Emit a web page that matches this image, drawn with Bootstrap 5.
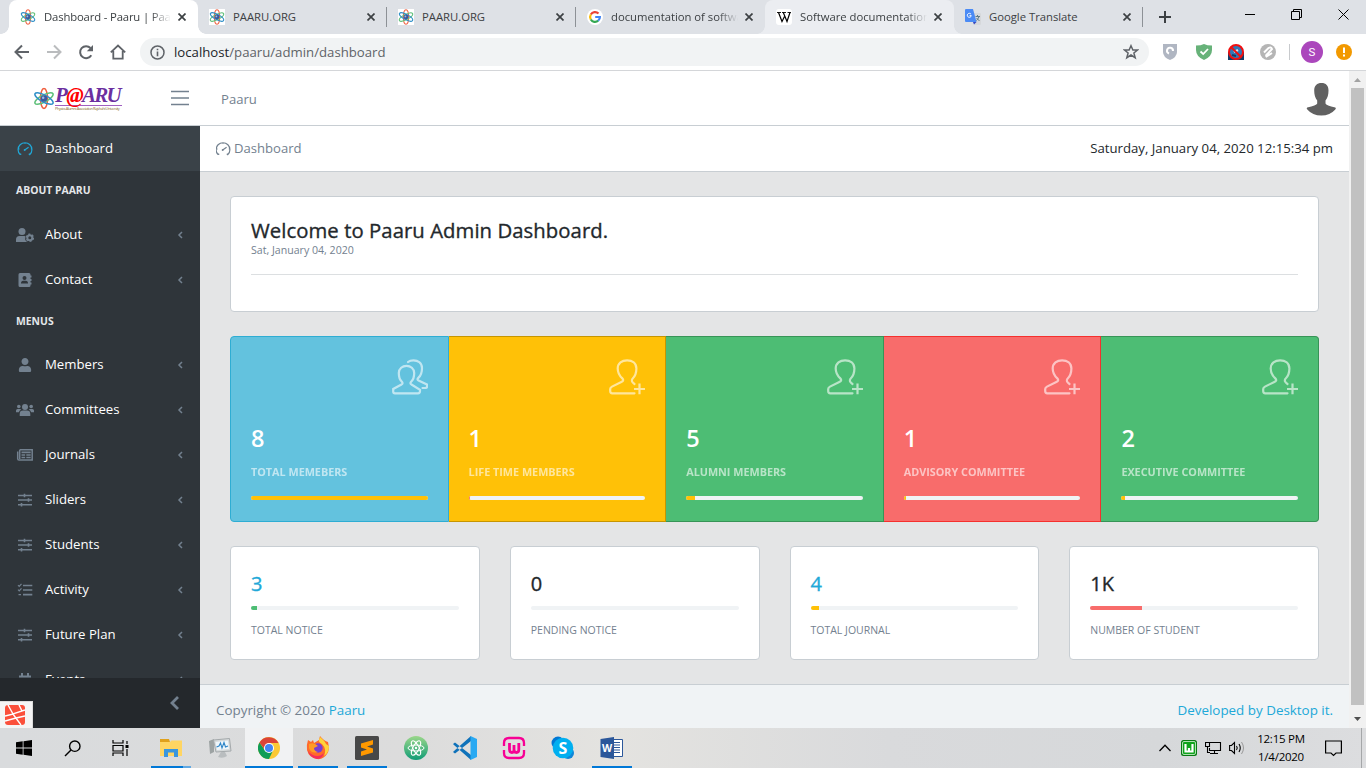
<!DOCTYPE html>
<html lang="en">
<head>
<meta charset="utf-8">
<meta name="viewport" content="width=device-width, initial-scale=1">
<title>Dashboard - Paaru | Paaru Admin</title>
<link href="https://cdn.jsdelivr.net/npm/bootstrap@5.3.0/dist/css/bootstrap.min.css" rel="stylesheet">
<style>
:root{--line:#c8ced3;--cyan:#20a8d8;--muted:#73818f}
html,body{height:768px;overflow:hidden}
body{font-family:"Open Sans","Noto Sans",sans-serif;font-size:13.1px;line-height:1.5;color:#23282c;background:#fff}
svg{display:block;flex:none}
.ln{fill:none}
.ln:not([stroke]){stroke:currentColor}
/* browser tabs */
.tabstrip{height:34px;background:#dee1e6;padding-left:9px;color:#3c4043}
.btab{width:189px;height:34px;padding:0 10px 0 11px;position:relative;font-size:11.3px;letter-spacing:-.02px}
.btab .ttl{width:127px;margin:0 7px 0 8px;overflow:hidden;white-space:nowrap}
.btab .fade-end{-webkit-mask-image:linear-gradient(90deg,#000 84%,transparent)}
.btab.on .ttl{letter-spacing:-.15px}
.btab.on,.btab.hov{border-radius:8px 8px 0 0}
.btab.on{background:#fff}.btab.hov{background:#ebedf1}
.btab.on::before,.btab.on::after,.btab.hov::before,.btab.hov::after{content:"";position:absolute;bottom:0;width:8px;height:8px}
.btab.on::before,.btab.hov::before{left:-8px;background:radial-gradient(circle at 0 0,transparent 7.5px,var(--t) 8px)}
.btab.on::after,.btab.hov::after{right:-8px;background:radial-gradient(circle at 100% 0,transparent 7.5px,var(--t) 8px)}
.btab.on{--t:#fff}.btab.hov{--t:#ebedf1}
.btab.sep::after{content:"";position:absolute;right:0;top:7px;width:1px;height:20px;background:#8d9196}
.winbtns{margin-left:auto;color:#000;padding-right:17px;padding-bottom:6px;gap:36px}
/* address row */
.toolrow{height:37px;border-bottom:1px solid #d4d6d9;padding:0 14px 0 14px;color:#5f6368}
.omni{height:28px;width:1009px;background:#f1f3f4;border-radius:14px;padding:0 10px;margin-left:14px;font-size:13.2px}
.omni .addr{margin-left:9px;padding-top:1px}
/* app */
.viewport{height:657px}
.topbar{height:55px;border-bottom:1px solid var(--line);color:var(--muted)}
.brandbox{width:170px;padding-left:33px}
.wordmark{width:67px}
.logo{font:italic bold 21px "Liberation Serif",serif;color:#6b2fa0;line-height:19px;letter-spacing:-1.7px;white-space:nowrap}
.logo b{color:#f00}
.logo-sub{font-size:4px;line-height:5px;border-top:1px solid #a060c0;color:#8a6d2f;white-space:nowrap;letter-spacing:-.48px}
.side{width:200px;background:#2f353a;color:#fff;height:602px}
.side .menu{height:552px;overflow:hidden}
.side .nav-link{height:45px;padding:1px 17px 0 16px;color:#fff;font-size:13.2px}
.side .nav-link svg:first-child{width:18px;height:16px;color:var(--muted);margin-right:11px}
.side .nav-link.active{background:#3a4248}
.side .nav-link.active svg:first-child{color:var(--cyan)}
.side .chev{margin-left:auto;color:var(--muted)}
.side .grp{height:40.500px;padding:0 16px;line-height:39px;font-size:10.4px;font-weight:700;color:#e4e7ea}
.mini{height:50px;background:#24282c;color:var(--muted);padding-right:20px}
.work{background:#e4e5e6;height:602px;overflow:hidden}
.crumbs{height:46px;border-bottom:1px solid var(--line);background:#fff;padding:1px 16px 0;color:var(--muted)}
.crumbs .now{color:#23282c;font-size:13.2px}
.panels{padding:24px 30px;gap:24px}
.card{border-color:var(--line);border-radius:4px}
.welcome{height:116px;padding:20px}
.welcome h1{font-size:20.3px;font-weight:400;-webkit-text-stroke:.35px currentColor;line-height:26px;margin:0 0 1px;letter-spacing:.07px}
.welcome small{font-size:10.600px;line-height:13px;color:var(--muted)}
.welcome hr{margin:17px 0 0;border-color:#dcdfe1;opacity:1}
.stats{height:186px}
.stats .card{padding:20px;color:#fff}
.stats .num{font-size:23.5px;font-weight:600;line-height:34px;margin-top:26px}
.stats .lbl{font-size:10.8px;font-weight:700;opacity:.6;line-height:17px;margin:8px 0 16px;white-space:nowrap}
.stats .ico{opacity:.6;margin:2px 0 0 auto}
.progress{height:4px;flex:none;border-radius:4px;background:#f0f3f5}
.c-info{background:#63c2de;border-color:#2eadd3}
.c-warn{background:#ffc107;border-color:#c69500}
.c-ok{background:#4dbd74;border-color:#379457}
.c-bad{background:#f86c6b;border-color:#f5302e}
.b-warn{background:#ffc107}.b-ok{background:#4dbd74}.b-bad{background:#f86c6b}
.minis{gap:30px}
.minis .card{height:114px;padding:20px;flex:1 1 0}
.minis .num{font-size:20px;-webkit-text-stroke:.35px currentColor;line-height:34px}
.minis .progress{margin:5px 0 11px}
.minis .lbl{font-size:10.500px;line-height:18px;color:var(--muted);white-space:nowrap}
.cy{color:var(--cyan)}
.foot{height:50px;border-top:1px solid var(--line);background:#f0f3f5;padding:1px 16px 0;color:var(--muted);font-size:13.400px}
.sbar{width:17px;background:#f1f1f1;height:657px}
.sbar .thumb{width:13px;height:617px;background:#c1c1c1}
.debugbar{position:absolute;left:0;top:701px;width:33px;height:27px;background:#f5f5f5;border:1px solid #ddd;border-left:0;border-bottom:0;padding:3px 5px}
/* taskbar */
.tasks{height:40px;background:linear-gradient(90deg,#d9dbdd 0,#dcdcdc 30%,#e4e3e0 45%,#d9dadc 65%,#d6d8da 85%,#dcdddf);color:#000}
.tk{width:48px;height:40px;display:flex;align-items:center;justify-content:center}
.apps{margin-left:3px;gap:1px}
.run{background:linear-gradient(#0078d7,#0078d7) 50% 100%/40px 2px no-repeat}
.run-multi{background:linear-gradient(90deg,#0078d7 80%,#62a9e3 80%) 50% 100%/40px 2px no-repeat}
.cur{background:linear-gradient(#0078d7,#0078d7) 0 100%/48px 2px no-repeat #f1f2f3}
.clock{font-size:11.500px;line-height:18px;width:62px;letter-spacing:-.25px;text-align:center;padding-bottom:1px}
</style>
</head>
<body>
<svg width="0" height="0" class="position-absolute">
<defs>
<symbol id="atom" viewBox="0 0 16 16"><g fill="none" stroke-width="1.1"><ellipse cx="8" cy="8" rx="2.6" ry="7.3" stroke="#f06040"/><ellipse cx="8" cy="8" rx="2.6" ry="7.4" transform="rotate(62 8 8)" stroke="#5fc07a"/><ellipse cx="8" cy="8" rx="2.6" ry="7.4" transform="rotate(-62 8 8)" stroke="#2f8fc8"/></g><circle cx="8" cy="8" r="2.4" fill="#3c5a9c"/><circle cx="7.4" cy="7.4" r=".9" fill="#9db8e8"/></symbol>
<symbol id="x" viewBox="0 0 8 8"><path class="ln" stroke-width="1.7" d="M.5.5l7 7M7.5.5l-7 7"/></symbol>
<symbol id="speed" viewBox="0 0 18 16"><path class="ln" stroke-width="1.2" d="M4.2 13.6A6.9 6.9 0 1 1 13.8 13.6L12.8 12.7M4.2 13.6L5.2 12.7M9 8.8L12.6 6.3M2.2 8h1.4M9 1.7v1M14.8 8h1"/><circle cx="8.7" cy="9" r="1" fill="currentColor"/></symbol>
<symbol id="user" viewBox="-56 0 560 512"><path fill="currentColor" d="M224 256c70.7 0 128-57.3 128-128S294.700 0 224 0 96 57.300 96 128s57.300 128 128 128zm89.600 32h-16.700c-22.200 10.200-46.900 16-72.900 16s-50.600-5.800-72.900-16h-16.700C60.200 288 0 348.200 0 422.400V464c0 26.500 21.500 48 48 48h352c26.500 0 48-21.500 48-48v-41.600c0-74.200-60.200-134.400-134.400-134.400z"/></symbol>
<symbol id="usercog" viewBox="0 0 18 16"><circle cx="6" cy="4.500" r="3.500" fill="currentColor"/><path fill="currentColor" d="M0 15V12.500Q0 9 3.500 9H8.500Q9.500 9 9.200 10L9.300 13L11 15Z"/><circle cx="13.800" cy="10.800" r="2.500" class="ln" stroke-width="2"/><circle cx="13.800" cy="10.800" r="3.700" class="ln" stroke-width="1.200" stroke-dasharray="2 1.870"/></symbol>
<symbol id="book" viewBox="0 0 18 16"><path fill="currentColor" fill-rule="evenodd" d="M4 1H13Q14.500 1 14.500 2.500V3.500H15.500V5.500H14.500V7H15.500V9H14.500V10.500H15.500V12.500H14.500V13.500Q14.500 15 13 15H4Q2.500 15 2.500 13.500V2.500Q2.500 1 4 1ZM8.500 4A2 2 0 1 0 8.500 8A2 2 0 1 0 8.500 4ZM5 11.500H12Q12 8.700 9.800 8.700H7.200Q5 8.700 5 11.500Z"/></symbol>
<symbol id="group" viewBox="0 0 18 16"><g fill="currentColor"><circle cx="9" cy="5" r="3"/><circle cx="2.800" cy="4.500" r="1.800"/><circle cx="15.200" cy="4.500" r="1.800"/><path d="M3.700 14V12Q3.700 8.600 7 8.600H11Q14.300 8.600 14.300 12V14ZM0 10.200V8.500Q0 7 1.600 7H4Q4.800 7 5.300 7.500Q3.200 8.500 2.900 10.200ZM18 10.200V8.500Q18 7 16.400 7H14Q13.200 7 12.700 7.500Q14.800 8.500 15.100 10.200Z"/></g></symbol>
<symbol id="news" viewBox="0 0 18 16"><path class="ln" stroke-width="1.500" d="M3.700 2.700H16.200V13H3Q1.700 13 1.700 11.700V4.500M3.700 2.700V12"/><path class="ln" stroke-width="1.700" d="M5.500 5.300H14.700M5.500 8H9.200M10.300 8H14.700M5.500 10.500H9.200M10.300 10.500H14.700"/></symbol>
<symbol id="sliders" viewBox="0 0 18 16"><path class="ln" stroke-width="1.600" d="M2 3.500H16M2 8H16M2 12.700H16M8.500 1.800V5.200M12.500 6.300V9.700M5.500 11V14.400"/></symbol>
<symbol id="tasks" viewBox="0 0 18 16"><path class="ln" stroke-width="1.700" d="M7 3.500H16.300M7 8H16.300M7 12.700H16.300"/><path class="ln" stroke-width="1.200" d="M2 3.200L3.200 4.400L5.500 1.800M2 7.700L3.200 8.900L5.500 6.300M2.500 12.700H5"/></symbol>
<symbol id="cal" viewBox="0 0 18 16"><path fill="currentColor" d="M3 3.500H5V1H7V3.500H11V1H13V3.500H15V5.500H3ZM3 6.500H15V15H3Z"/></symbol>
<symbol id="chev" viewBox="0 0 6 8"><path class="ln" stroke-width="1.500" d="M5 1L2 4L5 7"/></symbol>
<symbol id="follow" viewBox="0 0 36 36"><path class="ln" stroke-width="2.200" stroke-linecap="round" d="M25.500 34.300H3.300Q1.200 34.300 1.200 32V30Q1.200 28.600 3 27.600L12.300 23Q15.500 21.500 13.300 19.400C9.700 16 8.700 13 8.700 9.500C8.700 4 13 1.300 18.100 1.300S27.400 4 27.400 9.500C27.400 13 27 16.500 23.500 19.700Q21.500 22.500 25.500 25"/><path class="ln" stroke-width="2.200" d="M30.500 24.500V35.300M25 30H36"/></symbol>
<symbol id="people" viewBox="0 0 36 36"><path class="ln" stroke-width="2.200" stroke-linecap="round" d="M3 34.300H26Q28 34.300 28 32V30.800L19.500 25.500Q17.500 24.500 19.300 22.500C21.500 20.500 22.200 17 22.200 14C22.200 9.500 18.500 6.800 14.500 6.800S6.800 9.500 6.800 14C6.800 17 7.500 20.500 9.700 22.500Q11.500 24.500 9.500 25.500L1.200 30V32.500Q1.200 34.300 3 34.300ZM16 3Q18 1.300 21.500 1.300C26 1.300 30 4 30 9C30 13 29 16.500 26.500 18.700Q24.500 20.500 26.500 21.500L35 25.500V27.500Q35 29 33.500 29H30.500"/></symbol>
</defs>
</svg>

<header>
<div class="tabstrip d-flex align-items-center">
  <div class="btab on d-flex align-items-center"><svg width="16" height="16"><use href="#atom"/></svg><span class="ttl fade-end">Dashboard - Paaru | Paaru</span><svg width="8" height="8"><use href="#x"/></svg></div>
  <div class="btab sep d-flex align-items-center"><svg width="16" height="16" class="bg-white"><use href="#atom"/></svg><span class="ttl">PAARU.ORG</span><svg width="8" height="8"><use href="#x"/></svg></div>
  <div class="btab sep d-flex align-items-center"><svg width="16" height="16" class="bg-white"><use href="#atom"/></svg><span class="ttl">PAARU.ORG</span><svg width="8" height="8"><use href="#x"/></svg></div>
  <div class="btab d-flex align-items-center"><svg width="16" height="16" viewBox="0 0 16 16"><circle cx="8" cy="8" r="8" fill="#fff"/><g fill="none" stroke-width="2.200"><path stroke="#ea4335" d="M3.800 5.500A4.900 4.900 0 0 1 11.500 4.500"/><path stroke="#fbbc05" d="M3.800 10.500A4.900 4.900 0 0 1 3.800 5.500"/><path stroke="#34a853" d="M3.800 10.500A4.900 4.900 0 0 0 11.200 11.700"/><path stroke="#4285f4" d="M11.200 11.700Q12.900 10.200 12.900 8H8.200"/></g></svg><span class="ttl fade-end">documentation of software</span><svg width="8" height="8"><use href="#x"/></svg></div>
  <div class="btab hov d-flex align-items-center"><svg width="16" height="16" viewBox="0 0 16 16"><rect width="16" height="16" rx="3" fill="#fff"/><path d="M1 3.500H5M6 3.500H10M11.500 3.500H15" stroke="#000" stroke-width=".9"/><path class="ln" stroke="#000" stroke-width="1.200" d="M2.500 3.500L6 12.500L8.500 7.500M7.300 3.500L11 12.500L14 3.500"/></svg><span class="ttl fade-end">Software documentation</span><svg width="8" height="8"><use href="#x"/></svg></div>
  <div class="btab sep d-flex align-items-center"><svg width="16" height="16" viewBox="0 0 16 16"><path d="M7 4H15Q16 4 16 5V15Q16 16 15 16H9Z" fill="#d6d8db"/><path d="M1 0H8L11.500 13H1Q0 13 0 12V1Q0 0 1 0Z" fill="#4b8bf5"/><path d="M8 13H11.500L9 15.500Z" fill="#3547c0"/><path class="ln" stroke="#fff" stroke-width="1" d="M6 5.200A2 2 0 1 0 6.300 6.700H4.500"/><path class="ln" stroke="#607d8b" stroke-width="1" d="M10.500 7.500H15M12.500 6V7.500M14 7.500Q13.500 10 11.300 11.500M11.500 9L14.500 12"/></svg><span class="ttl">Google Translate</span><svg width="8" height="8"><use href="#x"/></svg></div>
  <svg class="ms-3" width="12" height="12" viewBox="0 0 12 12"><path stroke="#3c4043" stroke-width="2" d="M6 0V12M0 6H12"/></svg>
  <div class="winbtns d-flex align-items-center">
    <svg width="10" height="10"><path stroke="#000" d="M0 5.500H10"/></svg>
    <svg width="11" height="11"><path class="ln" d="M.5 2.500H8.500V10.500H.5ZM2.500 2.500V.5H10.500V8.500H8.500"/></svg>
    <svg width="11" height="11"><path class="ln" d="M.5.5L10.500 10.500M10.500.5L.5 10.500"/></svg>
  </div>
</div>
<div class="toolrow d-flex align-items-center">
  <svg width="16" height="16"><path class="ln" stroke-width="2" d="M15 8H2M8 1.500L1.500 8L8 14.500"/></svg>
  <svg class="ms-3" width="16" height="16"><path class="ln" stroke="#babcbe" stroke-width="2" d="M1 8H14M8 1.500L14.500 8L8 14.500"/></svg>
  <svg class="ms-3" width="16" height="16"><path class="ln" stroke-width="2" d="M13.300 11.200A6 6 0 1 1 12.500 4"/><path fill="currentColor" d="M15 1V7.200H8.800Z"/></svg>
  <svg class="ms-3" width="16" height="16"><path class="ln" stroke-width="1.800" d="M.8 8.300L8 1.500L15.200 8.300M3.300 7V14.700H12.700V7"/></svg>
  <div class="omni d-flex align-items-center"><svg width="15" height="15" viewBox="0 0 15 15"><circle class="ln" cx="7.500" cy="7.500" r="6.500" stroke-width="1.500"/><path class="ln" stroke-width="1.600" d="M7.500 6.500V11.200M7.500 3.800V5.300"/></svg>
    <span class="addr"><span class="text-dark">localhost</span>/paaru/admin/dashboard</span>
    <svg class="ms-auto" width="16" height="16"><path class="ln" stroke-width="1.500" d="M8 1.700L9.900 6H14.500L10.900 9L12.200 13.700L8 11L3.800 13.700L5.100 9L1.500 6H6.100Z"/></svg></div>
  <div class="d-flex align-items-center ms-auto">
    <svg width="14" height="16"><path fill="#b0b6c2" d="M0 0H14V8Q14 13 7 16Q0 13 0 8Z"/><path class="ln" stroke="#fff" stroke-width="2" d="M6 9.500A3 3 0 1 1 10 7"/></svg>
    <svg width="16" height="16" style="margin-left:19px"><path fill="#67b279" d="M0 1.500Q5 1.500 8 0Q11 1.500 16 1.500V6Q16 12.500 8 16Q0 12.500 0 6Z"/><path class="ln" stroke="#fff" stroke-width="1.800" d="M4.500 7.500L7.200 10L12 5"/></svg>
    <svg width="16" height="16" class="ms-3"><path fill="#123c69" d="M0 8H16V16H0Z"/><circle cx="8" cy="8" r="7" fill="#2f78b8" stroke="#f01010" stroke-width="2"/><path stroke="#dce8f0" stroke-width="2.500" d="M6 8L10 6"/><path stroke="#123c69" stroke-width="2" d="M4 11L8 12"/><path stroke="#f01010" stroke-width="2" d="M3 3L13 13"/></svg>
    <svg width="16" height="16" class="ms-3"><circle cx="8" cy="8" r="8" fill="#b5b5b5"/><path class="ln" stroke="#fff" stroke-width="2" d="M4 8.500L8.500 4Q11 2.500 12 5L7.500 10Q5.500 11 6.500 12.500L12 9"/></svg>
    <svg width="1" height="16" style="margin:0 7px 0 13px"><path stroke="#c8cacd" stroke-width="2" d="M0 0V16"/></svg>
    <svg width="22" height="22" class="ms-1"><circle cx="11" cy="11" r="11" fill="#ab47bc"/><text x="11" y="15" text-anchor="middle" font-size="11.500" font-family="Roboto" fill="#fff">S</text></svg>
    <svg width="16" height="16" style="margin-left:13px;margin-right:0"><circle cx="8" cy="8" r="8" fill="#f29900"/><path stroke="#fff" stroke-width="2" d="M8 3.500V9M8 10.500V12.500"/></svg>
  </div>
</div>
</header>

<div class="viewport d-flex">
<div class="flex-grow-1">
  <div class="topbar d-flex align-items-center">
    <div class="brandbox d-flex align-items-center"><svg width="22" height="25" viewBox="0 0 16 16"><use href="#atom"/></svg><div class="wordmark"><div class="logo">P<b>@</b>ARU</div><div class="logo-sub">Physics Alumni Association Rajshahi University</div></div></div>
    <svg width="20" height="16"><path class="ln" stroke-width="1.600" d="M1 1.500H19M1 8H19M1 14.500H19"/></svg>
    <span class="pt-1" style="margin-left:31px">Paaru</span>
    <svg class="ms-auto" width="40" height="36" style="margin-right:9px"><path transform="translate(6 3)" fill="#616161" d="M15.500 0C11 0 8.200 2.500 8.200 7.500C8.200 12 9.200 15 11.200 17.500V20.500Q10.500 22.500 1.200 24.500Q0 25 1.300 26.500Q6.500 32.500 15.300 32.500T29.300 26.500Q30.500 25 29.300 24.500Q20 22.500 19.500 20.500V17.500C21.500 15 22.500 12 22.500 7.500C22.500 2.500 20 0 15.500 0Z"/></svg>
  </div>
  <div class="d-flex">
    <nav class="side">
      <div class="menu nav flex-column flex-nowrap">
        <a class="nav-link active d-flex align-items-center flex-shrink-0"><svg><use href="#speed"/></svg>Dashboard</a>
        <div class="grp flex-shrink-0">ABOUT PAARU</div>
        <a class="nav-link d-flex align-items-center flex-shrink-0"><svg><use href="#usercog"/></svg>About<svg class="chev" width="6" height="8"><use href="#chev"/></svg></a>
        <a class="nav-link d-flex align-items-center flex-shrink-0"><svg><use href="#book"/></svg>Contact<svg class="chev" width="6" height="8"><use href="#chev"/></svg></a>
        <div class="grp flex-shrink-0">MENUS</div>
        <a class="nav-link d-flex align-items-center flex-shrink-0"><svg viewBox="0 0 18 16"><use href="#user" x="1" y="1" width="16" height="14"/></svg>Members<svg class="chev" width="6" height="8"><use href="#chev"/></svg></a>
        <a class="nav-link d-flex align-items-center flex-shrink-0"><svg><use href="#group"/></svg>Committees<svg class="chev" width="6" height="8"><use href="#chev"/></svg></a>
        <a class="nav-link d-flex align-items-center flex-shrink-0"><svg><use href="#news"/></svg>Journals<svg class="chev" width="6" height="8"><use href="#chev"/></svg></a>
        <a class="nav-link d-flex align-items-center flex-shrink-0"><svg><use href="#sliders"/></svg>Sliders<svg class="chev" width="6" height="8"><use href="#chev"/></svg></a>
        <a class="nav-link d-flex align-items-center flex-shrink-0"><svg><use href="#sliders"/></svg>Students<svg class="chev" width="6" height="8"><use href="#chev"/></svg></a>
        <a class="nav-link d-flex align-items-center flex-shrink-0"><svg><use href="#tasks"/></svg>Activity<svg class="chev" width="6" height="8"><use href="#chev"/></svg></a>
        <a class="nav-link d-flex align-items-center flex-shrink-0"><svg><use href="#sliders"/></svg>Future Plan<svg class="chev" width="6" height="8"><use href="#chev"/></svg></a>
        <a class="nav-link d-flex align-items-center flex-shrink-0"><svg><use href="#cal"/></svg>Events<svg class="chev" width="6" height="8"><use href="#chev"/></svg></a>
      </div>
      <div class="mini d-flex align-items-center justify-content-end"><svg width="11" height="14"><path class="ln" stroke-width="2.800" d="M9 1L3 7L9 13"/></svg></div>
    </nav>
    <main class="work flex-grow-1">
      <div class="crumbs d-flex align-items-center justify-content-between">
        <span class="d-flex align-items-center"><svg width="16" height="16" viewBox="2 0 16 16" style="margin-right:2px"><use href="#speed" width="18" height="16"/></svg>Dashboard</span>
        <span class="now">Saturday, January 04, 2020 12:15:34 pm</span>
      </div>
      <div class="panels d-flex flex-column">
        <section class="card welcome"><h1>Welcome to Paaru Admin Dashboard.</h1><small>Sat, January 04, 2020</small><hr></section>
        <section class="card-group stats">
          <div class="card c-info"><svg class="ico" width="36" height="36"><use href="#people"/></svg><div class="num">8</div><div class="lbl">TOTAL MEMEBERS</div><div class="progress"><div class="progress-bar b-warn" style="width:100%"></div></div></div>
          <div class="card c-warn"><svg class="ico" width="36" height="36"><use href="#follow"/></svg><div class="num">1</div><div class="lbl">LIFE TIME MEMBERS</div><div class="progress"><div class="progress-bar b-bad" style="width:.5%"></div></div></div>
          <div class="card c-ok"><svg class="ico" width="36" height="36"><use href="#follow"/></svg><div class="num">5</div><div class="lbl">ALUMNI MEMBERS</div><div class="progress"><div class="progress-bar b-warn" style="width:5%"></div></div></div>
          <div class="card c-bad"><svg class="ico" width="36" height="36"><use href="#follow"/></svg><div class="num">1</div><div class="lbl">ADVISORY COMMITTEE</div><div class="progress"><div class="progress-bar b-warn" style="width:1%"></div></div></div>
          <div class="card c-ok"><svg class="ico" width="36" height="36"><use href="#follow"/></svg><div class="num">2</div><div class="lbl">EXECUTIVE COMMITTEE</div><div class="progress"><div class="progress-bar b-warn" style="width:2%"></div></div></div>
        </section>
        <section class="minis d-flex">
          <div class="card"><div class="num cy">3</div><div class="progress"><div class="progress-bar b-ok" style="width:3%"></div></div><div class="lbl">TOTAL NOTICE</div></div>
          <div class="card"><div class="num">0</div><div class="progress"></div><div class="lbl">PENDING NOTICE</div></div>
          <div class="card"><div class="num cy">4</div><div class="progress"><div class="progress-bar b-warn" style="width:4%"></div></div><div class="lbl">TOTAL JOURNAL</div></div>
          <div class="card"><div class="num">1K</div><div class="progress"><div class="progress-bar b-bad" style="width:25%"></div></div><div class="lbl">NUMBER OF STUDENT</div></div>
        </section>
      </div>
      <footer class="foot d-flex align-items-center justify-content-between"><span>Copyright © 2020 <span class="cy">Paaru</span></span><span class="cy">Developed by Desktop it.</span></footer>
    </main>
  </div>
</div>
<div class="sbar d-flex flex-column align-items-center">
  <svg width="17" height="17"><path fill="#a3a3a3" d="M5 11H12L8.500 7Z"/></svg><div class="thumb flex-shrink-0"></div><svg class="mt-auto" width="17" height="17"><path fill="#505050" d="M5 6H12L8.500 10Z"/></svg>
</div>
</div>
<div class="debugbar"><svg width="20" height="20"><rect width="20" height="20" rx="3" fill="#fb503b"/><path class="ln" stroke="#fff" stroke-width="1.400" d="M0 11L8 9L16 20M3 0L8 9L20 5M8 9M11 13L20 11M14 0L17 6M0 16L11 13"/></svg></div>

<div class="tasks d-flex">
  <div class="tk"><svg width="16" height="16"><path d="M0 2.300L6.700 1.300V7.600H0ZM7.500 1.200L16 0V7.600H7.500ZM0 8.400H6.700V14.700L0 13.700ZM7.500 8.400H16V16L7.500 14.800Z"/></svg></div>
  <div class="tk"><svg width="17" height="17"><circle class="ln" cx="10.800" cy="6.200" r="5.200" stroke-width="1.400"/><path stroke="#000" stroke-width="1.500" d="M7 10L1 16"/></svg></div>
  <div class="tk"><svg width="17" height="16"><path class="ln" stroke-width="1.200" d="M1 0V3H11V0M1 5.500H11V11H1ZM1 16V13H11V16M15 1V4M15 9V16"/><path d="M13.500 5H16.500V8H13.500Z"/></svg></div>
  <div class="apps d-flex">
    <div class="tk run-multi"><svg width="22" height="20"><path fill="#e0a11b" d="M0 1H9L10 4H0Z"/><path fill="#ffd562" d="M0 4H10L11.500 2.500H22V18H0Z"/><path fill="#3a96dd" d="M4 11H18V19H14V14.500H8V19H4Z"/></svg></div>
    <div class="tk"><svg width="24" height="22"><path fill="#9da3a3" d="M1 4L6 2V15L2 17Z"/><path fill="#d6dadb" stroke="#a4a9ab" d="M5.500 3L21.500 1.500L23 14L8 15Z"/><path fill="#eef6fb" d="M7.500 5L20 3.500L21 12L9 13Z"/><path class="ln" stroke="#2f86c8" stroke-width="1.100" d="M8.500 10L11 9L12.500 6L14 11L16 5.500L17.500 10L20 9"/><path fill="#b9bdbf" d="M13 15H17L19 19Q15 22 10 20Z"/></svg></div>
    <div class="tk cur"><svg width="22" height="22" viewBox="0 0 24 24"><circle cx="12" cy="12" r="12" fill="#fbc935"/><path fill="#0f9d58" d="M1.600 6A12 12 0 0 0 12 24L16.500 14.500L12 12L7.500 14.500Z"/><path fill="#db4437" d="M1.600 6A12 12 0 0 1 22.400 6.500H12L7.500 14Z"/><circle cx="12" cy="12" r="5.500" fill="#fff"/><circle cx="12" cy="12" r="4.400" fill="#4285f4"/></svg></div>
    <div class="tk run"><svg width="24" height="24"><path fill="#ff6a2a" d="M2 4L5 6L7 4L8 7L13 4L14 0Q18 5 22 6Q24 14 21 18Q17 24 11 23Q3 22 1 14Q.5 8 2 4Z"/><path fill="#ffd43a" d="M14 1Q19 5 20 8L23 10Q23 17 18 20Q21 13 16 8Q12 6 13 4Z"/><path fill="#f42c5d" d="M1.500 14Q5 20 12 20Q17 19 18 16Q17 23 11 23Q4 22 1.500 14Z"/><circle cx="12" cy="12" r="4.700" fill="#7a3fd0"/><path fill="#ff9b25" d="M3 8Q8 6 12 10L8 12Q8 15 12 16Q5 18 3 12Z"/></svg></div>
    <div class="tk run"><svg width="24" height="24"><rect width="24" height="24" rx="1.500" fill="#484848"/><path fill="#ff9800" d="M6 7.500L18 4V8.500L12 10.500L18 12.500V16.500L6 20V15.500L12 13.500L6 11.500Z"/></svg></div>
    <div class="tk"><svg width="24" height="24"><defs><linearGradient id="ga" x2="0" y2="1"><stop stop-color="#9bd78a"/><stop offset="1" stop-color="#109c76"/></linearGradient></defs><circle cx="12" cy="12" r="12" fill="url(#ga)"/><g fill="none" stroke="#fff"><ellipse cx="12" cy="12" rx="3" ry="8" transform="rotate(28 12 12)"/><ellipse cx="12" cy="12" rx="3" ry="8" transform="rotate(-28 12 12)"/><ellipse cx="12" cy="12" rx="8" ry="3"/></g><circle cx="12" cy="12" r="1.200" fill="#fff"/></svg></div>
    <div class="tk"><svg width="24" height="24"><path fill="#0f72ba" d="M0 8L2 6.500L18 19V24L1 9ZM0 16L2 17.500L18 5V0L1 15Z"/><path fill="#29a9f2" d="M17.500 0L24 3V21L17.500 24Z"/></svg></div>
    <div class="tk"><svg width="24" height="24"><g fill="none" stroke="#f70094"><path stroke-width="2.300" d="M2 10V7Q2 2 7 2H17Q22 2 22 7V10M2 14V17Q2 22 7 22H17Q22 22 22 17V14"/><path stroke-width="2.800" d="M7.500 7V13.500Q7.500 16.500 10 16.500Q12 16.500 12 13.500V9V13.500Q12 16.500 14.500 16.500Q16.800 16.500 16.800 13.500V7"/></g></svg></div>
    <div class="tk"><svg width="24" height="24"><circle cx="7" cy="7" r="6.500" fill="#0078d4"/><circle cx="17" cy="17" r="6" fill="#0f86d8"/><circle cx="12" cy="12" r="10.300" fill="#00aff0"/><text x="12" y="17.500" text-anchor="middle" font-size="16" font-weight="700" fill="#fff">S</text></svg></div>
    <div class="tk run"><svg width="24" height="24"><path fill="#fff" stroke="#2b579a" d="M12 3.500H22.500V20.500H12Z"/><path stroke="#2b579a" stroke-width="1.200" d="M14 6.500H20M14 9H20M14 11.500H20M14 14H20M14 16.500H20"/><path fill="#2b579a" d="M.5 3L14 1V23L.5 21Z"/><text x="7" y="16" text-anchor="middle" font-size="10.500" font-weight="700" fill="#fff">W</text></svg></div>
  </div>
  <div class="d-flex align-items-center ms-auto">
    <svg width="12" height="8"><path class="ln" stroke-width="1.300" d="M.5 7L6 1.300L11.500 7"/></svg>
    <svg width="16" height="16" style="margin-left:10px"><rect width="16" height="16" rx="2.500" fill="#087a12"/><rect x="1.500" y="1.500" width="13" height="13" rx="1.500" fill="#10a41c" stroke="#d8f5d8" stroke-width=".8"/><path class="ln" stroke="#fff" stroke-width="2.200" d="M4.500 4V11.500H11.500V4M8 8V11.500"/></svg>
    <svg width="17" height="14" style="margin-left:8px"><path class="ln" stroke-width="1.100" d="M4.500 1.500H15.500V9.500H4.500V7M5 12.500H13M9.500 9.500V12.500M.5 1.500H4.500V5.500H.5ZM2.500 5.500V11.500H5"/></svg>
    <svg width="17" height="14" style="margin-left:7px"><path class="ln" stroke-width="1.100" d="M.6 4.500H2.500L5.500 1.500V12.500L2.500 9.500H.6ZM7.500 5Q9 7 7.500 9M10 3Q12.500 7 10 11"/><path class="ln" stroke="#999" d="M12.500 1Q16.500 7 12.500 13"/></svg>
    <div class="clock" style="margin-left:4px">12:15 PM<br>1/4/2020</div>
    <svg width="17" height="17" style="margin-left:13px"><path class="ln" stroke-width="1.200" d="M.6 1H16.400V13H11L8.500 15.500L6 13H.6Z"/></svg>
    <div style="border-left:1px solid #a5a7a9;height:40px;width:5px;margin-left:19px"></div>
  </div>
</div>
<script src="https://cdn.jsdelivr.net/npm/bootstrap@5.3.0/dist/js/bootstrap.bundle.min.js"></script>
</body>
</html>
